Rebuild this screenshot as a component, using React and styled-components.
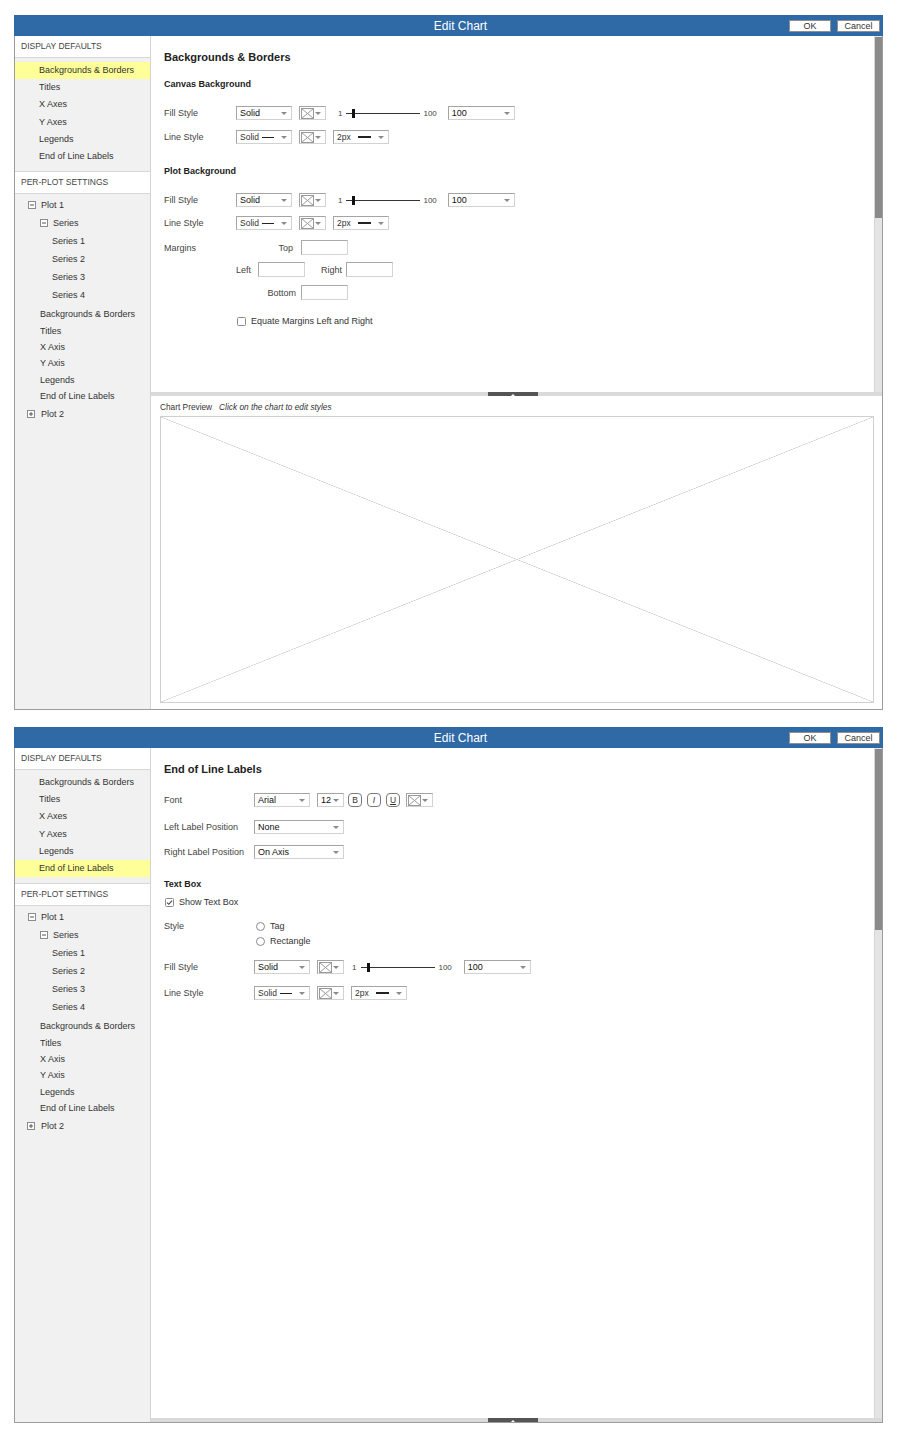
import React from "react";
import styled, { createGlobalStyle } from "styled-components";

const GlobalStyle = createGlobalStyle`
  html, body {
    margin: 0;
    padding: 0;
    background: #ffffff;
  }
  body {
    font-family: "Liberation Sans", Arial, sans-serif;
    color: #333333;
  }
  * {
    box-sizing: border-box;
  }
`;

const Page = styled.div`
  display: flex;
  flex-direction: column;
  gap: 17px;
  width: 900px;
  padding: 15px 0 30px 14px;
`;

const Dialog = styled.div`
  width: 869px;
  height: ${p => p.$h}px;
  display: flex;
  flex-direction: column;
  border: 1px solid #9c9c9c;
  border-top: 0;
`;

const Header = styled.div`
  height: 21px;
  flex-shrink: 0;
  margin: 0 -1px;
  padding-right: 3px;
  display: flex;
  align-items: center;
  background: #2f6aa7;
`;

const HeaderTitle = styled.div`
  flex: 1;
  padding-left: 118px;
  text-align: center;
  color: #ffffff;
  font-size: 12px;
`;

const HeaderButtons = styled.div`
  display: flex;
  gap: 6px;
`;

const HeaderButton = styled.div`
  width: ${p => p.$w}px;
  height: 12px;
  background: #ffffff;
  border: 1px solid #8f8f8f;
  color: #333;
  font-size: 9px;
  line-height: 10px;
  text-align: center;
`;

const Body = styled.div`
  flex: 1;
  min-height: 0;
  display: flex;
`;

/* ---------- sidebar ---------- */

const Sidebar = styled.div`
  width: 136px;
  flex-shrink: 0;
  display: flex;
  flex-direction: column;
  background: #f1f1f1;
  border-right: 1px solid #d4d4d4;
`;

const SectionHead = styled.div`
  height: ${p => (p.$top ? 23 : 22)}px;
  margin-top: ${p => (p.$top ? 6 : 0)}px;
  padding-left: 6px;
  background: #ffffff;
  border-top: ${p => (p.$top ? "1px solid #d8d8d8" : "0")};
  border-bottom: 1px solid #d8d8d8;
  font-size: 8.5px;
  line-height: 21px;
  color: #444;
  text-transform: uppercase;
`;

const ItemList = styled.div`
  padding-top: 4px;
`;

const Item = styled.div`
  height: 17.2px;
  line-height: 17.2px;
  padding-left: 24px;
  font-size: 9px;
  color: #333;
  background: ${p => (p.$active ? "#ffff99" : "transparent")};
`;

const Tree = styled.div`
  padding-top: 2px;
  display: flex;
  flex-direction: column;
`;

const TreeRow = styled.div`
  height: ${p => p.$h}px;
  margin-top: ${p => p.$mt || 0}px;
  display: flex;
  align-items: center;
  gap: ${p => p.$gap || 5}px;
  padding-left: ${p => p.$indent}px;
  font-size: 9px;
  color: #333;
`;

const ToggleIcon = ({ open }) => (
  <svg width="8" height="8" viewBox="0 0 8 8">
    <rect x="0.5" y="0.5" width="7" height="7" fill="#ffffff" stroke="#8c8c8c" />
    <path d="M2 4H6" stroke="#555" />
    {!open && <path d="M4 2V6" stroke="#555" />}
  </svg>
);

const displayItems = [
  "Backgrounds & Borders",
  "Titles",
  "X Axes",
  "Y Axes",
  "Legends",
  "End of Line Labels"
];

const plotItems = [
  "Backgrounds & Borders",
  "Titles",
  "X Axis",
  "Y Axis",
  "Legends",
  "End of Line Labels"
];

function SideNav({ active }) {
  return (
    <Sidebar>
      <SectionHead>Display Defaults</SectionHead>
      <ItemList>
        {displayItems.map(name => (
          <Item key={name} $active={name === active}>
            {name}
          </Item>
        ))}
      </ItemList>
      <SectionHead $top>Per-Plot Settings</SectionHead>
      <Tree>
        <TreeRow $h={18} $indent={13}>
          <ToggleIcon open />
          Plot 1
        </TreeRow>
        <TreeRow $h={18} $indent={25}>
          <ToggleIcon open />
          Series
        </TreeRow>
        {[1, 2, 3, 4].map(n => (
          <TreeRow key={n} $h={18} $indent={37}>
            Series {n}
          </TreeRow>
        ))}
        {plotItems.map((name, i) => (
          <TreeRow key={name} $h={16.4} $mt={i === 0 ? 2 : 0} $indent={25}>
            {name}
          </TreeRow>
        ))}
        <TreeRow $h={18} $mt={1} $indent={12} $gap={6}>
          <ToggleIcon />
          Plot 2
        </TreeRow>
      </Tree>
    </Sidebar>
  );
}

/* ---------- main area ---------- */

const Main = styled.div`
  flex: 1;
  min-width: 0;
  display: flex;
  flex-direction: column;
`;

const FormArea = styled.div`
  display: flex;
  flex: ${p => (p.$h ? "none" : "1")};
  height: ${p => (p.$h ? `${p.$h}px` : "auto")};
  min-height: 0;
`;

const FormContent = styled.div`
  flex: 1;
  padding: 14px 0 0 13px;
`;

const ScrollTrack = styled.div`
  width: 8px;
  flex-shrink: 0;
  background: #e4e4e4;
  border-left: 1px solid #d6d6d6;
`;

const ScrollThumb = styled.div`
  height: ${p => p.$h}px;
  margin-top: 1px;
  background: #8a8a8a;
`;

const Splitter = styled.div`
  height: 4px;
  flex-shrink: 0;
  display: flex;
  justify-content: center;
  padding-right: 8px;
  background: #dadada;
`;

const SplitHandle = styled.div`
  width: 50px;
  display: flex;
  justify-content: center;
  align-items: flex-end;
  background: #555555;
`;

const Title = styled.div`
  font-size: 11px;
  line-height: 14px;
  font-weight: bold;
  color: #222;
`;

const SubHead = styled.div`
  margin-top: ${p => p.$mt}px;
  font-size: 9px;
  line-height: 12px;
  font-weight: bold;
  color: #222;
`;

const Row = styled.div`
  display: flex;
  align-items: center;
  height: ${p => p.$h || 14}px;
  margin-top: ${p => p.$mt || 0}px;
`;

const FieldLabel = styled.div`
  width: ${p => p.$w}px;
  flex-shrink: 0;
  font-size: 9px;
  color: #444;
`;

const SelectBox = styled.div`
  width: ${p => p.$w}px;
  height: 14px;
  flex-shrink: 0;
  margin-left: ${p => p.$ml || 0}px;
  padding-left: ${p => (p.$pad !== undefined ? p.$pad : 3)}px;
  display: flex;
  align-items: center;
  background: #ffffff;
  border: 1px solid;
  border-color: #a4a4a4 #d2d2d2 #d2d2d2 #a4a4a4;
  font-size: 9px;
  color: #111;
`;

const Caret = styled.span`
  width: 0;
  height: 0;
  margin-left: auto;
  margin-right: 4px;
  border-left: 3px solid transparent;
  border-right: 3px solid transparent;
  border-top: 3px solid #8a8a8a;
`;

const SmallValue = styled.span`
  display: flex;
  align-items: center;
  gap: ${p => p.$gap}px;
  font-size: 8.5px;
  color: #333;
`;

const Stroke = styled.span`
  width: ${p => p.$w}px;
  height: ${p => p.$t}px;
  background: #222;
`;

const Slide = styled.div`
  display: flex;
  align-items: center;
  margin-left: ${p => p.$ml}px;
  font-size: 8px;
  color: #444;
`;

const Track = styled.div`
  width: 74px;
  height: 1px;
  margin: 0 3px 0 ${p => p.$ml}px;
  padding-left: 6px;
  display: flex;
  align-items: center;
  background: #333;
`;

const Thumb = styled.div`
  width: 3px;
  height: 9px;
  flex-shrink: 0;
  background: #111;
`;

const StyleButton = styled.div`
  width: 14px;
  height: 14px;
  flex-shrink: 0;
  margin-left: ${p => p.$ml}px;
  display: flex;
  align-items: center;
  justify-content: center;
  border: 1px solid #7a7a7a;
  border-radius: 4px;
  font-size: 8.5px;
  color: #333;
  font-style: ${p => (p.$italic ? "italic" : "normal")};
  text-decoration: ${p => (p.$under ? "underline" : "none")};
`;

const TextInput = styled.div`
  width: 47px;
  height: 15px;
  flex-shrink: 0;
  background: #ffffff;
  border: 1px solid;
  border-color: #a9a9a9 #d4d4d4 #d4d4d4 #a9a9a9;
`;

const MarginLabel = styled.div`
  width: ${p => p.$w}px;
  flex-shrink: 0;
  padding-right: ${p => p.$pr || 0}px;
  text-align: ${p => p.$align || "left"};
  font-size: 9px;
  color: #444;
`;

const CheckRow = styled.div`
  display: flex;
  align-items: center;
  gap: 5px;
  height: ${p => p.$h}px;
  margin-top: ${p => p.$mt}px;
  padding-left: ${p => p.$indent}px;
  font-size: 9px;
  color: #333;
`;

const Radio = styled.span`
  width: 9px;
  height: 9px;
  border-radius: 50%;
  border: 1px solid #8a8a8a;
  background: #fff;
`;

const Preview = styled.div`
  flex: 1;
  min-height: 0;
  display: flex;
  flex-direction: column;
  padding: 5px 8px 6px 9px;
`;

const PreviewBar = styled.div`
  display: flex;
  gap: 7px;
  font-size: 8.3px;
  line-height: 12px;
  color: #333;
`;

const Hint = styled.span`
  font-style: italic;
`;

const ChartBox = styled.div`
  flex: 1;
  margin-top: 3px;
  border: 1px solid #cfcfcf;
  background:
    linear-gradient(to top right, transparent calc(50% - 0.6px), #c9c9c9 50%, transparent calc(50% + 0.6px)),
    linear-gradient(to bottom right, transparent calc(50% - 0.6px), #c9c9c9 50%, transparent calc(50% + 0.6px)),
    #ffffff;
`;

const CrossBox = () => (
  <svg width="13" height="11" viewBox="0 0 13 11">
    <rect x="0.5" y="0.5" width="12" height="10" fill="#fff" stroke="#9a9a9a" />
    <path d="M0.5 0.5L12.5 10.5M12.5 0.5L0.5 10.5" stroke="#9a9a9a" />
  </svg>
);

const CheckMark = ({ checked }) => (
  <svg width="9" height="9" viewBox="0 0 9 9">
    <rect x="0.5" y="0.5" width="8" height="8" rx="1" fill="#fff" stroke="#8a8a8a" />
    {checked && <path d="M2 4.6L3.8 6.3L7 2.6" fill="none" stroke="#444" strokeWidth="1.1" />}
  </svg>
);

const Select = ({ w, ml, children }) => (
  <SelectBox $w={w} $ml={ml}>
    {children}
    <Caret />
  </SelectBox>
);

const ColorPick = ({ ml }) => (
  <SelectBox $w={27} $ml={ml} $pad={1}>
    <CrossBox />
    <Caret />
  </SelectBox>
);

function FillRow({ labelW, mt, slideMl, trackMl, selMl }) {
  return (
    <Row $mt={mt}>
      <FieldLabel $w={labelW}>Fill Style</FieldLabel>
      <Select w={56}>Solid</Select>
      <ColorPick ml={7} />
      <Slide $ml={slideMl}>
        1
        <Track $ml={trackMl}>
          <Thumb />
        </Track>
        100
      </Slide>
      <Select w={67} ml={selMl}>100</Select>
    </Row>
  );
}

function LineRow({ labelW, mt }) {
  return (
    <Row $mt={mt}>
      <FieldLabel $w={labelW}>Line Style</FieldLabel>
      <Select w={56}>
        <SmallValue $gap={3}>
          Solid <Stroke $w={12} $t={1} />
        </SmallValue>
      </Select>
      <ColorPick ml={7} />
      <Select w={56} ml={7}>
        <SmallValue $gap={7}>
          2px <Stroke $w={13} $t={2} />
        </SmallValue>
      </Select>
    </Row>
  );
}

function BackgroundsForm() {
  return (
    <FormContent>
      <Title>Backgrounds &amp; Borders</Title>
      <SubHead $mt={14}>Canvas Background</SubHead>
      <FillRow labelW={72} mt={16} slideMl={12} trackMl={4} selMl={11} />
      <LineRow labelW={72} mt={10} />
      <SubHead $mt={21}>Plot Background</SubHead>
      <FillRow labelW={72} mt={16} slideMl={12} trackMl={4} selMl={11} />
      <LineRow labelW={72} mt={9} />
      <Row $h={15} $mt={10}>
        <FieldLabel $w={72}>Margins</FieldLabel>
        <MarginLabel $w={65} $pr={8} $align="right">Top</MarginLabel>
        <TextInput />
      </Row>
      <Row $h={15} $mt={7}>
        <FieldLabel $w={72} />
        <MarginLabel $w={22}>Left</MarginLabel>
        <TextInput />
        <MarginLabel $w={41} $pr={4} $align="right">Right</MarginLabel>
        <TextInput />
      </Row>
      <Row $h={15} $mt={8}>
        <FieldLabel $w={72} />
        <MarginLabel $w={65} $pr={5} $align="right">Bottom</MarginLabel>
        <TextInput />
      </Row>
      <CheckRow $h={10} $mt={16} $indent={73}>
        <CheckMark />
        Equate Margins Left and Right
      </CheckRow>
    </FormContent>
  );
}

function LabelsForm() {
  return (
    <FormContent>
      <Title>End of Line Labels</Title>
      <Row $mt={17}>
        <FieldLabel $w={90}>Font</FieldLabel>
        <Select w={56}>Arial</Select>
        <Select w={27} ml={7}>12</Select>
        <StyleButton $ml={4}>B</StyleButton>
        <StyleButton $ml={5} $italic>I</StyleButton>
        <StyleButton $ml={5} $under>U</StyleButton>
        <ColorPick ml={6} />
      </Row>
      <Row $mt={13}>
        <FieldLabel $w={90}>Left Label Position</FieldLabel>
        <Select w={90}>None</Select>
      </Row>
      <Row $mt={11}>
        <FieldLabel $w={90}>Right Label Position</FieldLabel>
        <Select w={90}>On Axis</Select>
      </Row>
      <SubHead $mt={19}>Text Box</SubHead>
      <CheckRow $h={12} $mt={6} $indent={1}>
        <CheckMark checked />
        Show Text Box
      </CheckRow>
      <Row $h={12} $mt={12}>
        <FieldLabel $w={92}>Style</FieldLabel>
        <CheckRow $h={12} $mt={0} $indent={0}>
          <Radio />
          Tag
        </CheckRow>
      </Row>
      <Row $h={12} $mt={3}>
        <FieldLabel $w={92} />
        <CheckRow $h={12} $mt={0} $indent={0}>
          <Radio />
          Rectangle
        </CheckRow>
      </Row>
      <FillRow labelW={90} mt={13} slideMl={8} trackMl={5} selMl={12} />
      <LineRow labelW={90} mt={12} />
    </FormContent>
  );
}

const Notch = () => (
  <svg width="4" height="2" viewBox="0 0 4 2">
    <path d="M0 2L2 0L4 2Z" fill="#ffffff" />
  </svg>
);

function DialogHeader() {
  return (
    <Header>
      <HeaderTitle>Edit Chart</HeaderTitle>
      <HeaderButtons>
        <HeaderButton $w={42}>OK</HeaderButton>
        <HeaderButton $w={43}>Cancel</HeaderButton>
      </HeaderButtons>
    </Header>
  );
}

export default function App() {
  return (
    <>
      <GlobalStyle />
      <Page>
        <Dialog $h={695}>
          <DialogHeader />
          <Body>
            <SideNav active="Backgrounds & Borders" />
            <Main>
              <FormArea $h={356}>
                <BackgroundsForm />
                <ScrollTrack>
                  <ScrollThumb $h={181} />
                </ScrollTrack>
              </FormArea>
              <Splitter>
                <SplitHandle>
                  <Notch />
                </SplitHandle>
              </Splitter>
              <Preview>
                <PreviewBar>
                  <span>Chart Preview</span>
                  <Hint>Click on the chart to edit styles</Hint>
                </PreviewBar>
                <ChartBox />
              </Preview>
            </Main>
          </Body>
        </Dialog>

        <Dialog $h={696}>
          <DialogHeader />
          <Body>
            <SideNav active="End of Line Labels" />
            <Main>
              <FormArea>
                <LabelsForm />
                <ScrollTrack>
                  <ScrollThumb $h={181} />
                </ScrollTrack>
              </FormArea>
              <Splitter>
                <SplitHandle>
                  <Notch />
                </SplitHandle>
              </Splitter>
            </Main>
          </Body>
        </Dialog>
      </Page>
    </>
  );
}
